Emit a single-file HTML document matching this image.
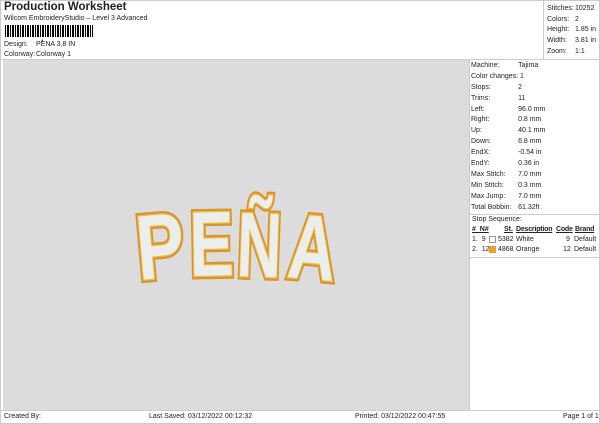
<!DOCTYPE html>
<html><head><style>
*{margin:0;padding:0;box-sizing:border-box}
body{width:600px;height:424px;background:#fff;font-family:"Liberation Sans",sans-serif;font-size:7px;color:#222;position:relative;overflow:hidden}
.a{position:absolute;white-space:nowrap}
table{border-collapse:collapse}
td{padding:0;height:10.8px;font-size:7px}
.t td{height:10.9px}
</style></head><body>
<div class="a" style="left:0;top:0;width:600px;height:424px;border:1px solid #ccc"></div>
<div class="a" style="left:4px;top:1px;font-size:11.5px;font-weight:bold">Production Worksheet</div>
<div class="a" style="left:4px;top:15px">Wilcom EmbroideryStudio – Level 3 Advanced</div>
<div class="a" style="left:5px;top:25px;height:12px;width:88px;background:repeating-linear-gradient(90deg,#000 0 1px,#fff 1px 2px,#000 2px 3px,#000 3px 4px,#fff 4px 5px)"></div>
<div class="a" style="left:41px;top:34px;font-size:8px;font-weight:bold">,</div>
<div class="a" style="left:4px;top:41px">Design:</div><div class="a" style="left:36px;top:41px">PENA 3,8 IN</div>
<div class="a" style="left:4px;top:51px">Colorway:</div><div class="a" style="left:36px;top:51px">Colorway 1</div>
<div class="a" style="left:543px;top:0;width:1px;height:59px;background:#ccc"></div>
<table class="a" style="left:547px;top:3px"><tr><td style="width:28px">Stitches:</td><td>10252</td></tr><tr><td>Colors:</td><td>2</td></tr><tr><td>Height:</td><td>1.85 in</td></tr><tr><td>Width:</td><td>3.81 in</td></tr><tr><td>Zoom:</td><td>1:1</td></tr></table>
<div class="a" style="left:0;top:59px;width:600px;height:1px;background:#ccc"></div>
<div class="a" style="left:3px;top:60px;width:466px;height:350px;background:#dcdcdc"></div>
<div class="a" style="left:469px;top:60px;width:1px;height:350px;background:#ccc"></div>
<table class="a t" style="left:471px;top:60px"><tr><td style="width:47px">Machine:</td><td>Tajima</td></tr><tr><td>Color changes:</td><td>&nbsp;1</td></tr><tr><td>Stops:</td><td>2</td></tr><tr><td>Trims:</td><td>11</td></tr><tr><td>Left:</td><td>96.0 mm</td></tr><tr><td>Right:</td><td>0.8 mm</td></tr><tr><td>Up:</td><td>40.1 mm</td></tr><tr><td>Down:</td><td>6.8 mm</td></tr><tr><td>EndX:</td><td>-0.54 in</td></tr><tr><td>EndY:</td><td>0.36 in</td></tr><tr><td>Max Stitch:</td><td>7.0 mm</td></tr><tr><td>Min Stitch:</td><td>0.3 mm</td></tr><tr><td>Max Jump:</td><td>7.0 mm</td></tr><tr><td>Total Bobbin:</td><td>61.32ft</td></tr></table>
<div class="a" style="left:470px;top:214px;width:130px;height:1px;background:#ccc"></div>
<div class="a" style="left:472px;top:216px">Stop Sequence:</div>
<div class="a" style="left:472px;top:226px;font-weight:bold;text-decoration:underline">#&nbsp; N#</div>
<div class="a" style="left:504px;top:226px;font-weight:bold;text-decoration:underline">St.</div>
<div class="a" style="left:516px;top:226px;font-weight:bold;text-decoration:underline;letter-spacing:-0.2px">Description</div>
<div class="a" style="left:556px;top:226px;font-weight:bold;text-decoration:underline;letter-spacing:-0.2px">Code</div>
<div class="a" style="left:575px;top:226px;font-weight:bold;text-decoration:underline;letter-spacing:-0.2px">Brand</div>
<div class="a" style="left:472px;top:236px">1.&nbsp; 9</div>
<div class="a" style="left:489px;top:236px;width:7px;height:7px;border:1px solid #999;background:#fff"></div>
<div class="a" style="left:498px;top:236px">5382</div><div class="a" style="left:516px;top:236px">White</div>
<div class="a" style="left:566px;top:236px">9</div><div class="a" style="left:574px;top:236px">Default</div>
<div class="a" style="left:472px;top:246px">2.&nbsp; 12</div>
<div class="a" style="left:489px;top:246px;width:7px;height:7px;background:#f39a2c"></div>
<div class="a" style="left:498px;top:246px">4868</div><div class="a" style="left:516px;top:246px">Orange</div>
<div class="a" style="left:563px;top:246px">12</div><div class="a" style="left:574px;top:246px">Default</div>
<div class="a" style="left:470px;top:257px;width:130px;height:1px;background:#ccc"></div>
<svg class="a" style="left:0;top:0" width="600" height="424">
<g font-family="Liberation Sans,sans-serif" font-weight="bold" font-size="92" fill="#eceeec" stroke-linejoin="miter">
<g stroke="#d8962a" stroke-width="7" paint-order="stroke">
<text transform="translate(139,280) rotate(-5) scale(0.78,1)">P</text>
<text transform="translate(190,276) rotate(-1) scale(0.72,1)">E</text>
<text transform="translate(236,276) rotate(2) scale(0.67,1)">Ñ</text>
<text transform="translate(286,277) rotate(5) scale(0.72,1)">A</text>
</g>
<g stroke="#f2b84a" stroke-width="2.5" paint-order="stroke">
<text transform="translate(139,280) rotate(-5) scale(0.78,1)">P</text>
<text transform="translate(190,276) rotate(-1) scale(0.72,1)">E</text>
<text transform="translate(236,276) rotate(2) scale(0.67,1)">Ñ</text>
<text transform="translate(286,277) rotate(5) scale(0.72,1)">A</text>
</g>
</g>
</svg>
<div class="a" style="left:0;top:410px;width:600px;height:1px;background:#ccc"></div>
<div class="a" style="left:4px;top:413px">Created By:</div>
<div class="a" style="left:149px;top:413px">Last Saved: 03/12/2022 00:12:32</div>
<div class="a" style="left:355px;top:413px">Printed: 03/12/2022 00:47:55</div>
<div class="a" style="left:563px;top:413px">Page 1 of 1</div>
</body></html>
